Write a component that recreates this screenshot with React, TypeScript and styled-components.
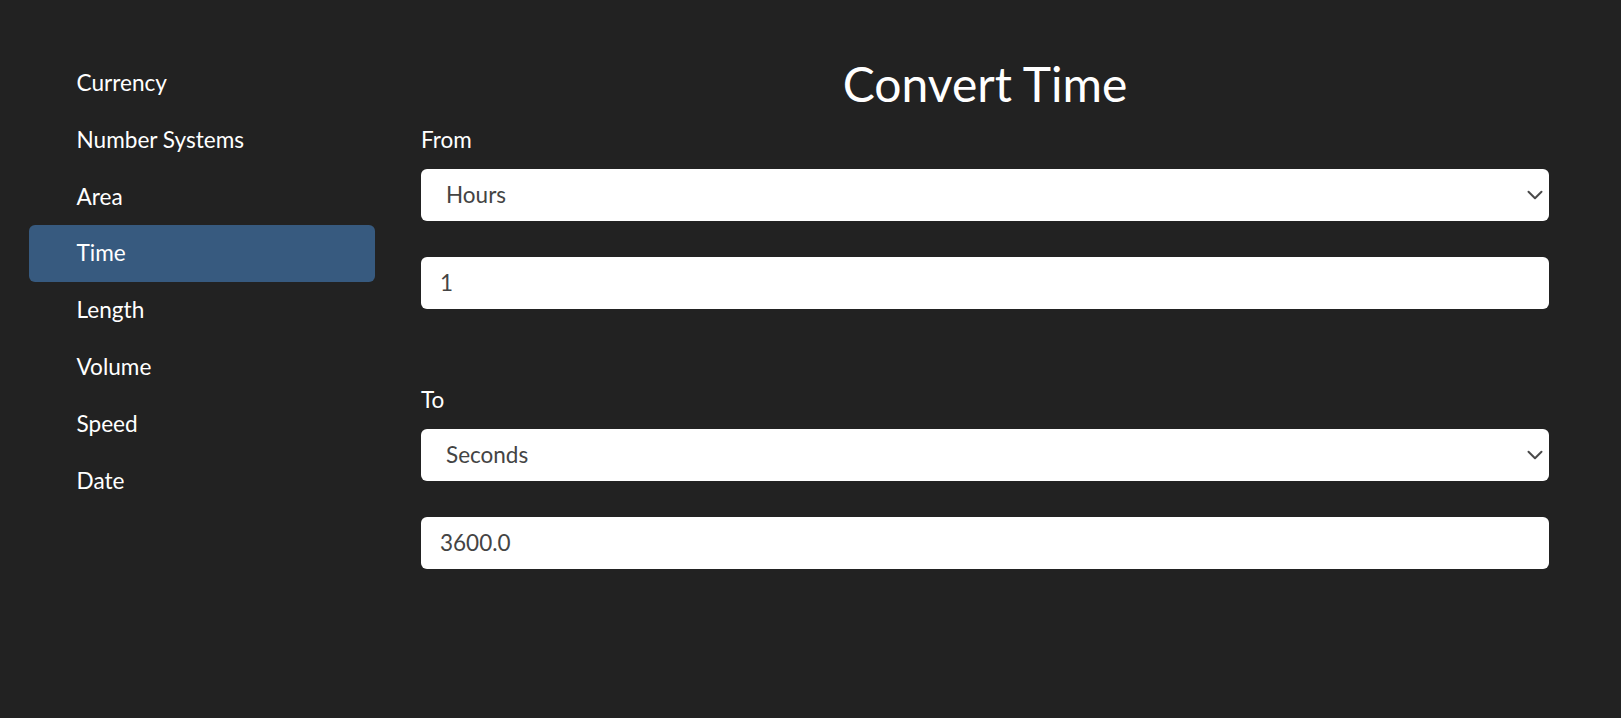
import React, { useState } from "react";
import styled, { createGlobalStyle } from "styled-components";

const GlobalStyle = createGlobalStyle`
  html, body {
    margin: 0;
    padding: 0;
    background: #222222;
  }
  body {
    font-family: Lato, "Noto Sans", "Liberation Sans", sans-serif;
    color: #ffffff;
  }
  * { box-sizing: border-box; }
`;

const Page = styled.div`
  display: flex;
  align-items: flex-start;
  gap: 46px;
  min-height: 718px;
  padding: 55px 72px 0 29px;
  background: #222222;
`;

const Sidebar = styled.nav`
  width: 346px;
  flex: 0 0 346px;
  display: flex;
  flex-direction: column;
`;

const NavItem = styled.a<{ $active?: boolean }>`
  display: flex;
  align-items: center;
  height: 56.8px;
  padding: 0 0 0 47.5px;
  border-radius: 6px;
  font-size: 22.6px;
  line-height: 1;
  color: #ffffff;
  text-decoration: none;
  cursor: pointer;
  background: ${(p) => (p.$active ? "#375a7f" : "transparent")};
`;

const Main = styled.main`
  flex: 1;
  display: flex;
  flex-direction: column;
`;

const Title = styled.h1`
  margin: 0 0 10px;
  font-size: 48px;
  line-height: 1.2;
  font-weight: 400;
  text-align: center;
  color: #ffffff;
`;

const Label = styled.label<{ $spaced?: boolean }>`
  display: block;
  margin: ${(p) => (p.$spaced ? "74px" : "0")} 0 13px;
  font-size: 22.5px;
  line-height: 33px;
  color: #ffffff;
`;

const SelectWrap = styled.div`
  position: relative;
  margin-bottom: 36px;
`;

const Select = styled.select`
  display: block;
  width: 100%;
  height: 52px;
  padding: 0 40px 0 25px;
  border: 0;
  border-radius: 6px;
  background: #ffffff;
  color: #444444;
  font-family: Lato, "Noto Sans", sans-serif;
  font-size: 22.5px;
  appearance: none;
  -webkit-appearance: none;
  outline: none;
`;

const Chevron = styled.svg`
  position: absolute;
  right: 6px;
  top: 50%;
  width: 16px;
  height: 10px;
  transform: translateY(-50%);
  pointer-events: none;
`;

const Input = styled.input`
  display: block;
  width: 100%;
  height: 52px;
  padding: 0 19px;
  border: 0;
  border-radius: 6px;
  background: #ffffff;
  color: #444444;
  font-family: Lato, "Noto Sans", sans-serif;
  font-size: 22.5px;
  outline: none;
`;

const units = ["Seconds", "Minutes", "Hours", "Days", "Weeks"];
const items = ["Currency", "Number Systems", "Area", "Time", "Length", "Volume", "Speed", "Date"];

const ChevronIcon = () => (
  <Chevron viewBox="0 0 16 10" fill="none">
    <path d="M1.5 1.8 8 8.2l6.5-6.4" stroke="#4a4a4a" strokeWidth="2" strokeLinecap="round" strokeLinejoin="round" />
  </Chevron>
);

export default function App() {
  const [from, setFrom] = useState("Hours");
  const [to, setTo] = useState("Seconds");
  const [value, setValue] = useState("1");

  return (
    <>
      <GlobalStyle />
      <Page>
        <Sidebar>
          {items.map((it) => (
            <NavItem key={it} $active={it === "Time"}>
              {it}
            </NavItem>
          ))}
        </Sidebar>
        <Main>
          <Title>Convert Time</Title>
          <Label>From</Label>
          <SelectWrap>
            <Select value={from} onChange={(e) => setFrom(e.target.value)}>
              {units.map((u) => (
                <option key={u}>{u}</option>
              ))}
            </Select>
            <ChevronIcon />
          </SelectWrap>
          <Input value={value} onChange={(e) => setValue(e.target.value)} />
          <Label $spaced>To</Label>
          <SelectWrap>
            <Select value={to} onChange={(e) => setTo(e.target.value)}>
              {units.map((u) => (
                <option key={u}>{u}</option>
              ))}
            </Select>
            <ChevronIcon />
          </SelectWrap>
          <Input value="3600.0" readOnly />
        </Main>
      </Page>
    </>
  );
}
